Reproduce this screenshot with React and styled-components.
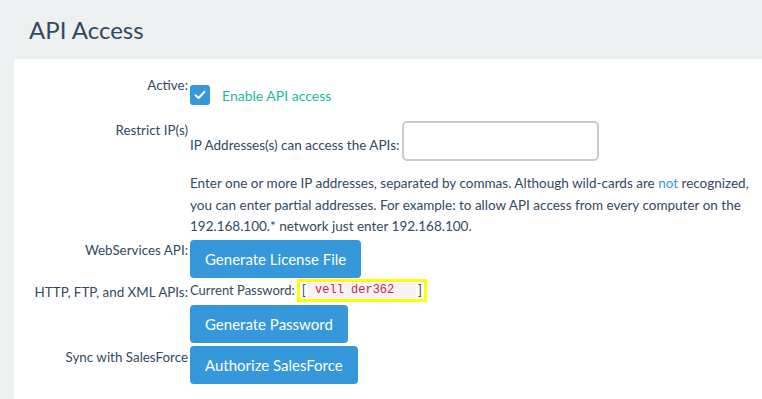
import React from "react";
import styled, { createGlobalStyle } from "styled-components";

const GlobalStyle = createGlobalStyle`
  html, body {
    margin: 0;
    padding: 0;
    background: #ecf0f1;
    font-family: Lato, "Open Sans", sans-serif;
    color: #34495e;
  }
`;

const Page = styled.div`
  width: 762px;
  height: 399px;
  overflow: hidden;
  display: flex;
  flex-direction: column;
`;

const Header = styled.header`
  height: 59px;
  box-sizing: border-box;
  padding: 17px 0 0 29px;
  h1 {
    margin: 0;
    font-size: 24px;
    line-height: 26px;
    font-weight: 400;
    color: #34495e;
  }
`;

const Card = styled.section`
  flex: 1;
  margin-left: 14px;
  background: #fff;
  border-radius: 4px 0 0 0;
  padding-top: 18px;
`;

const Row = styled.div`
  display: flex;
  align-items: flex-start;
  margin-top: ${(p) => p.$gap || 0}px;
`;

const Label = styled.div`
  width: 174px;
  flex-shrink: 0;
  text-align: right;
  font-size: 13.4px;
  line-height: 16px;
  padding-top: ${(p) => p.$offset || 0}px;
  margin-right: 2px;
  white-space: nowrap;
`;

const Content = styled.div`
  display: flex;
  flex-direction: column;
  align-items: flex-start;
  font-size: 13.5px;
`;

const CheckLine = styled.label`
  display: flex;
  align-items: center;
  gap: 12px;
  margin-top: 8px;
  font-size: 14px;
  color: #1abc9c;
`;

const Box = styled.span`
  width: 20px;
  height: 20px;
  border-radius: 3px;
  background: #3498db;
  display: flex;
  align-items: center;
  justify-content: center;
`;

const IpLine = styled.div`
  display: flex;
  align-items: flex-start;
  gap: 3px;
  span {
    margin-top: 16px;
    line-height: 16px;
  }
`;

const IpInput = styled.input`
  width: 197px;
  height: 40px;
  box-sizing: border-box;
  border: 2px solid #c8cccf;
  border-radius: 5px;
  outline: none;
`;

const Help = styled.p`
  margin: 12px 0 0;
  width: 572px;
  line-height: 21.5px;
  font-size: 13.5px;
  b {
    font-weight: 400;
    color: #3498db;
  }
`;

const Button = styled.button`
  height: 38px;
  padding: 0 15px;
  border: none;
  border-radius: 4px;
  background: #3498db;
  color: #fff;
  font-family: Lato, "Open Sans", sans-serif;
  font-size: 15px;
  cursor: pointer;
`;

const PasswordLine = styled.div`
  display: flex;
  align-items: center;
  font-size: 13px;
  line-height: 16px;
`;

const Highlight = styled.span`
  display: inline-flex;
  align-items: center;
  height: 23px;
  box-sizing: border-box;
  border: 3px solid #ffff00;
  padding: 0 2px;
  margin-left: 2px;
`;

const Code = styled.code`
  font-family: "Liberation Mono", "DejaVu Sans Mono", monospace;
  font-size: 12px;
  line-height: 15px;
  color: #c7254e;
  background: #f9f2f4;
  white-space: pre;
  margin: 0 2px;
`;

export default function App() {
  return (
    <Page>
      <GlobalStyle />
      <Header>
        <h1>API Access</h1>
      </Header>
      <Card>
        <Row>
          <Label>Active:</Label>
          <Content>
            <CheckLine>
              <Box>
                <svg width="12" height="10" viewBox="0 0 12 10">
                  <path d="M1.5 5.2 L4.6 8 L10.5 1.8" fill="none" stroke="#fff" strokeWidth="2" strokeLinecap="round" strokeLinejoin="round" />
                </svg>
              </Box>
              Enable API access
            </CheckLine>
          </Content>
        </Row>
        <Row $gap={16}>
          <Label $offset={1}>Restrict IP(s)</Label>
          <Content>
            <IpLine>
              <span>IP Addresses(s) can access the APIs:</span>
              <IpInput type="text" />
            </IpLine>
            <Help>
              Enter one or more IP addresses, separated by commas. Although wild-cards are <b>not</b> recognized,
              you can enter partial addresses. For example: to allow API access from every computer on the
              192.168.100.* network just enter 192.168.100.
            </Help>
          </Content>
        </Row>
        <Row $gap={2}>
          <Label $offset={2}>WebServices API:</Label>
          <Content>
            <Button>Generate License File</Button>
          </Content>
        </Row>
        <Row $gap={1}>
          <Label $offset={5}>HTTP, FTP, and XML APIs:</Label>
          <Content>
            <PasswordLine>
              Current Password:
              <Highlight>
                [<Code> vell der362   </Code>]
              </Highlight>
            </PasswordLine>
          </Content>
        </Row>
        <Row $gap={3}>
          <Label />
          <Content>
            <Button>Generate Password</Button>
          </Content>
        </Row>
        <Row $gap={3}>
          <Label $offset={3}>Sync with SalesForce</Label>
          <Content>
            <Button>Authorize SalesForce</Button>
          </Content>
        </Row>
      </Card>
    </Page>
  );
}
